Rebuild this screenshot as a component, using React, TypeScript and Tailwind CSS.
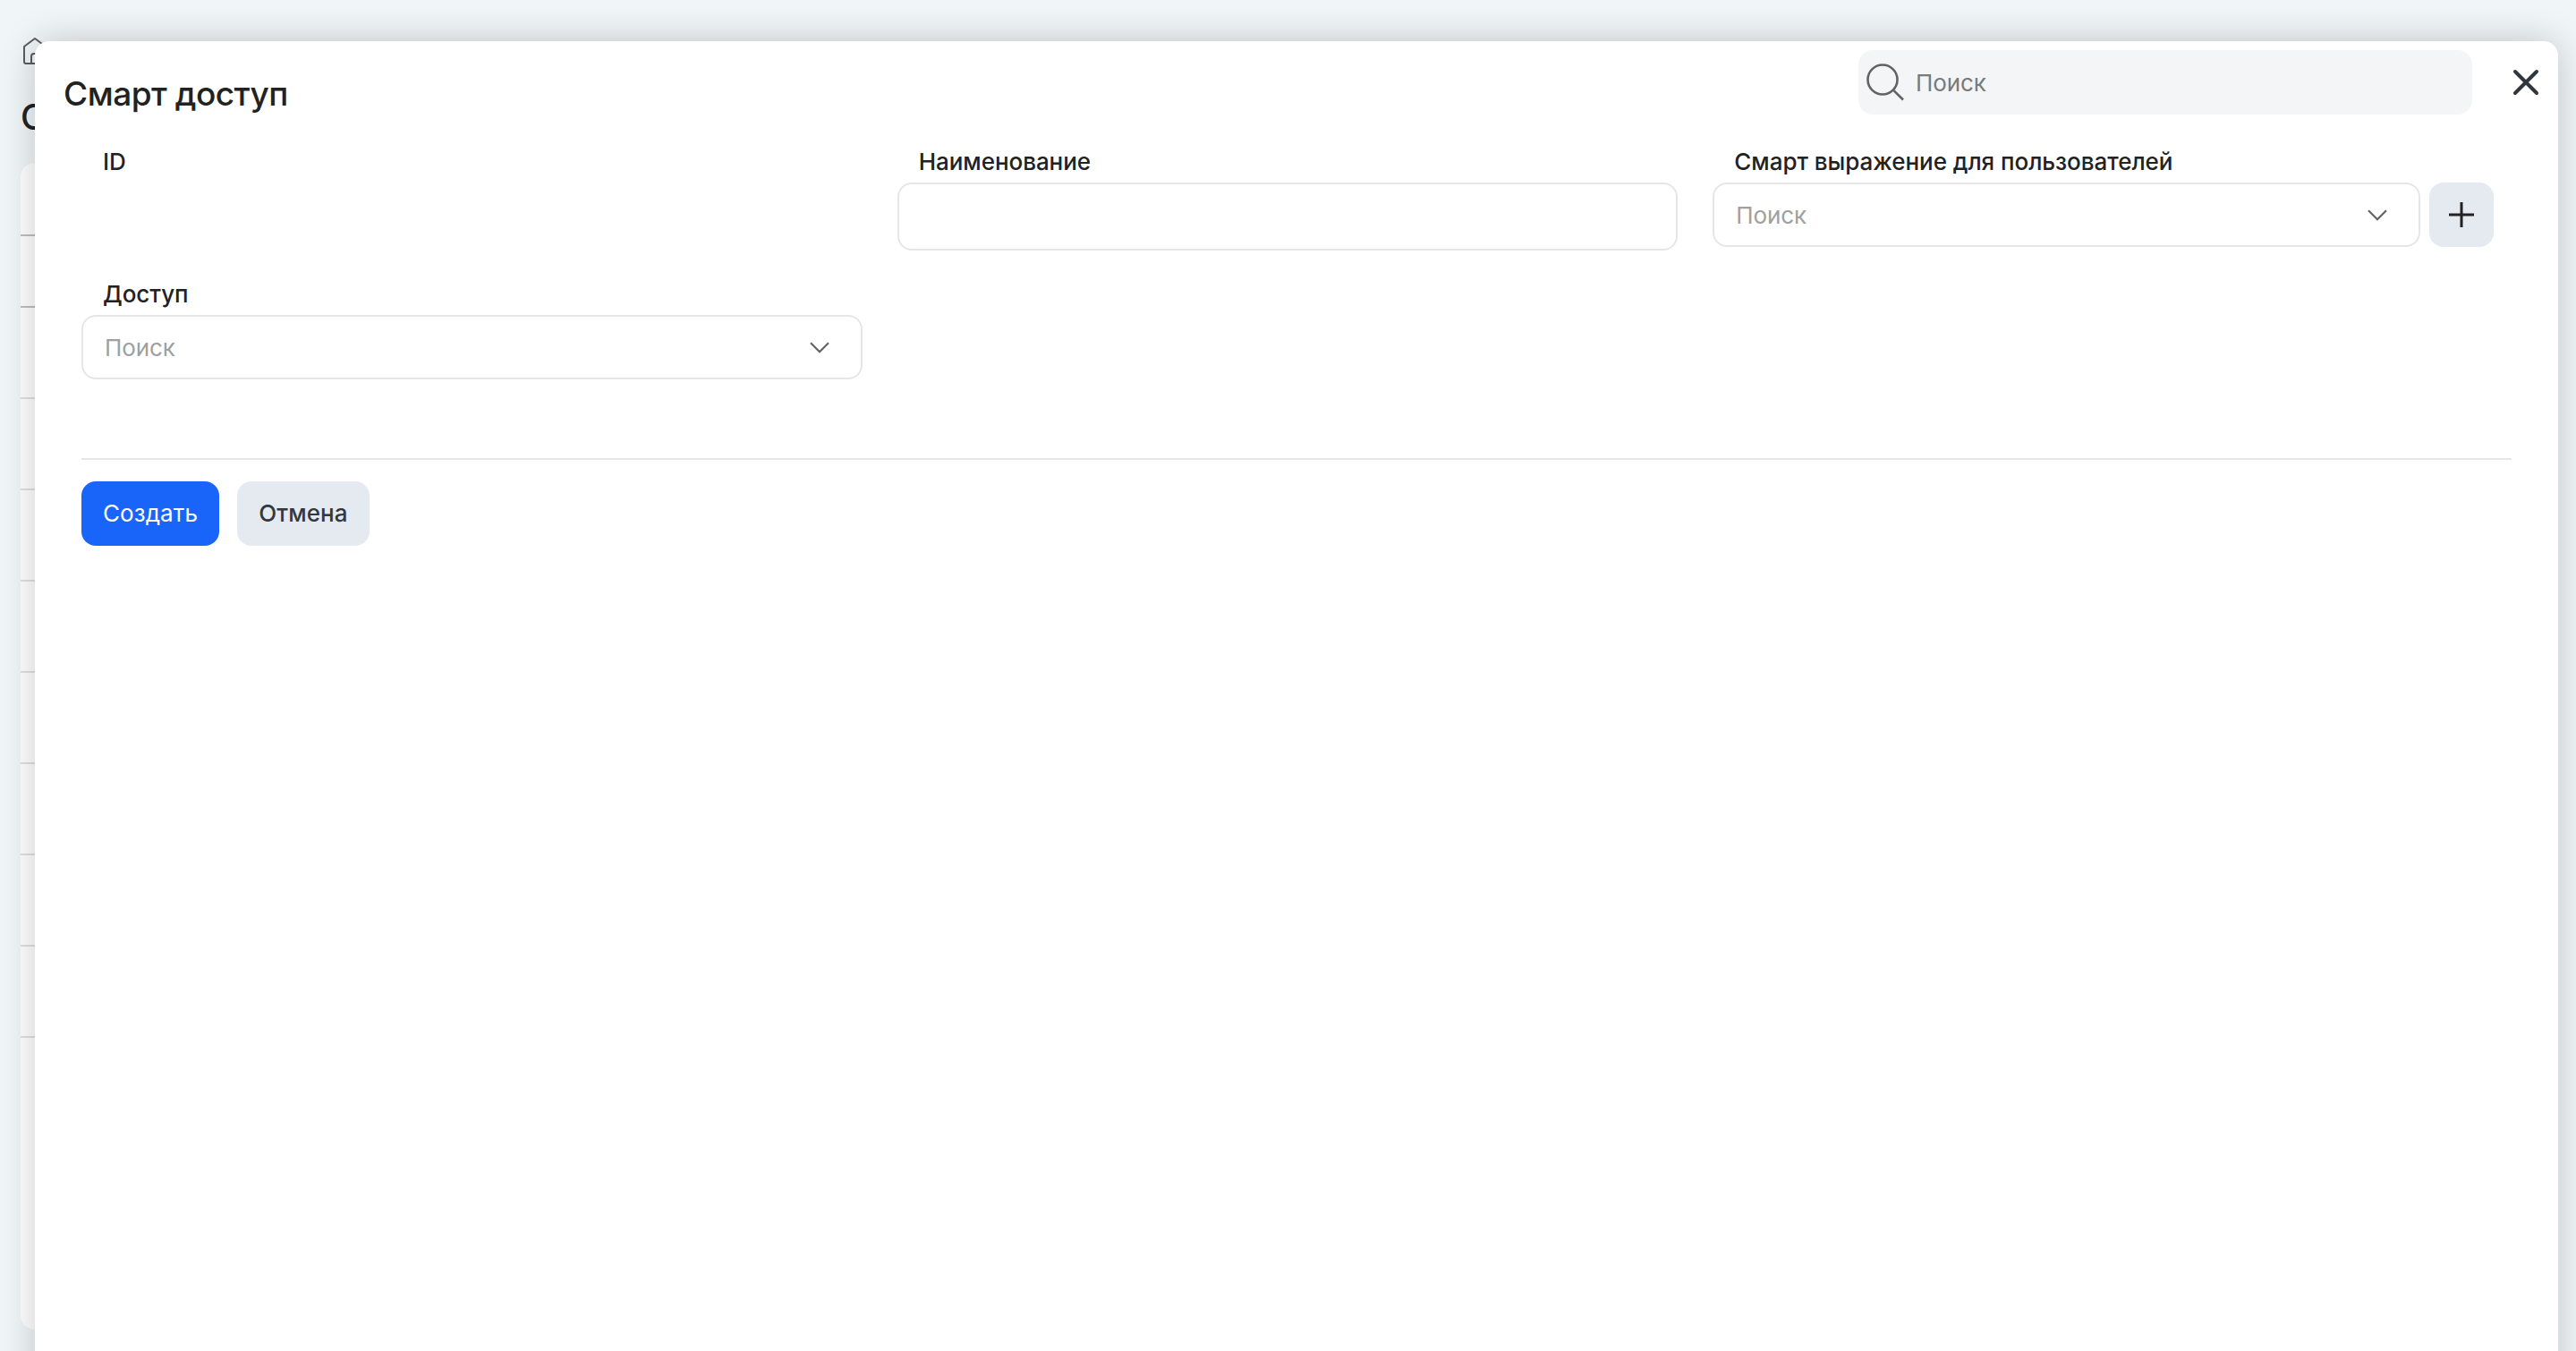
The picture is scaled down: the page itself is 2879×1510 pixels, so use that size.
import type { ReactNode } from "react";
import clsx from "clsx";

// header line + sub header line are darker than the rest of the rows
const rows = [
  "h-[82px] border-[#bfbfbf]",
  "h-20 border-[#bfbfbf]",
  "h-[102px] border-[#e0e0e0]",
  "h-[102px] border-[#e0e0e0]",
  "h-[102px] border-[#e0e0e0]",
  "h-[102px] border-[#e0e0e0]",
  "h-[102px] border-[#e0e0e0]",
  "h-[102px] border-[#e0e0e0]",
  "h-[102px] border-[#e0e0e0]",
  "h-[102px] border-[#e0e0e0]",
];

function HomeIcon() {
  return (
    <svg
      width="28"
      height="32"
      viewBox="0 0 28 32"
      fill="none"
      stroke="#5c5c5c"
      strokeWidth="2"
      strokeLinejoin="round"
    >
      <path d="M1 11 13 2 25 11V28a2 2 0 0 1-2 2H3a2 2 0 0 1-2-2Z" />
      <path d="M9 30V22a3 3 0 0 1 3-3h3a3 3 0 0 1 3 3v8" />
    </svg>
  );
}

function SearchIcon() {
  return (
    <svg width="42" height="42" viewBox="0 0 42 42" fill="none" stroke="#636363" strokeWidth="2.6">
      <circle cx="18" cy="18" r="16.500" />
      <path d="M29.700 29.300 41 40.500" />
    </svg>
  );
}

function ChevronIcon() {
  return (
    <svg width="22" height="13" viewBox="0 0 22 13" fill="none" stroke="#636363" strokeWidth="2.2">
      <path d="m1 1.200 10 10 10-10" />
    </svg>
  );
}

function Field({ label, children }: { label: string; children?: ReactNode }) {
  return (
    <div className="flex flex-col">
      <label className="mb-1.5 h-8 pl-6 text-[26px] leading-8 font-medium tracking-[-0.04px]">
        {label}
      </label>
      {children}
    </div>
  );
}

function Select({ className }: { className?: string }) {
  return (
    <div
      className={clsx(
        "flex h-[72px] items-center justify-between rounded-2xl border-2 border-[#e6e6e6] pr-[35px] pl-6",
        className,
      )}
    >
      <span className="pt-0.5 text-[26px] leading-8 tracking-[-0.1px] text-[#a0a0a0]">Поиск</span>
      <ChevronIcon />
    </div>
  );
}

function Background() {
  return (
    <div className="flex h-full w-60 flex-col pt-[41px] pl-[23px]">
      <div className="pl-[3px]">
        <HomeIcon />
      </div>
      <h1 className="mt-[34px] h-12 text-[39px] leading-[48px] font-medium">С</h1>
      <div className="mt-[27px] h-[1304px] rounded-2xl bg-white">
        {rows.map((row, idx) => (
          <div key={idx} className={clsx("border-b-2", row)} />
        ))}
      </div>
    </div>
  );
}

export default function App() {
  return (
    <div className="relative h-[1510px] w-[2879px] overflow-hidden bg-[#f0f5f8] font-['Inter','Liberation_Sans',sans-serif] text-[#222]">
      <Background />
      <div className="absolute inset-x-0 top-[46px] mr-5 ml-[39px] h-[1600px] rounded-2xl bg-white shadow-[0_0_40px_rgba(0,0,0,0.2)]">
        <header className="flex h-[119px] items-start justify-between pr-5 pl-8">
          <h2 className="mt-[35px] text-[37px] leading-[48px] font-medium tracking-[-0.5px]">
            Смарт доступ
          </h2>
          <div className="mt-2.5 flex items-center">
            <div className="flex h-[72px] w-[686px] items-center rounded-2xl bg-[#f3f5f7] pl-[9px]">
              <SearchIcon />
              <span className="ml-[13px] pt-0.5 text-[26px] leading-8 tracking-[-0.1px] text-[#7a7a7a]">
                Поиск
              </span>
            </div>
            <button className="ml-11">
              <svg
                width="32"
                height="32"
                viewBox="0 0 32 32"
                fill="none"
                stroke="#2f363d"
                strokeWidth="4"
                strokeLinecap="round"
              >
                <path d="m4 4 24 24M28 4 4 28" />
              </svg>
            </button>
          </div>
        </header>
        <form className="mx-[52px]">
          <div className="mr-5 grid grid-cols-3 gap-x-[39px]">
            <Field label="ID" />
            <Field label="Наименование">
              <input className="mt-px h-[76px] rounded-2xl border-2 border-[#e6e6e6] px-6" />
            </Field>
            <Field label="Смарт выражение для пользователей">
              <div className="mt-px flex gap-2.5">
                <Select className="flex-1" />
                <button
                  type="button"
                  className="flex size-[72px] items-center justify-center rounded-2xl bg-[#e5eaf1]"
                >
                  <svg width="28" height="28" viewBox="0 0 28 28" stroke="#222" strokeWidth="3">
                    <path d="M14 0v28M0 14h28" />
                  </svg>
                </button>
              </div>
            </Field>
          </div>
          <div className="mt-[33px] grid grid-cols-[873px]">
            <Field label="Доступ">
              <Select className="mt-px" />
            </Field>
          </div>
          <div className="mt-[88px] flex gap-5 border-t-2 border-[#e6e6e6] pt-6 text-[26px] leading-8 tracking-[0.1px]">
            <button type="button" className="h-[72px] w-[154px] rounded-2xl bg-[#1a65f9] text-white">
              Создать
            </button>
            <button
              type="button"
              className="h-[72px] w-[148px] rounded-2xl bg-[#e5eaf1] font-medium text-[#33383d]"
            >
              Отмена
            </button>
          </div>
        </form>
      </div>
    </div>
  );
}
